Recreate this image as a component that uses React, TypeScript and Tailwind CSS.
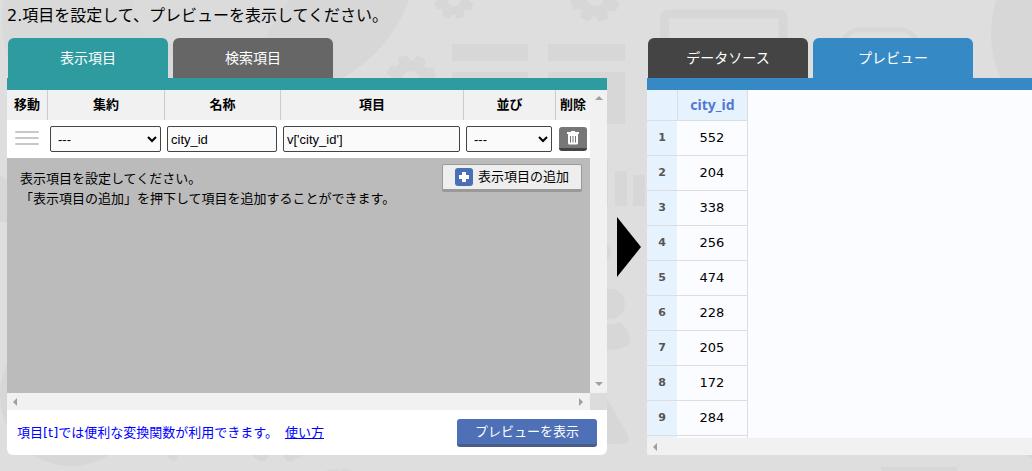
import { useState } from 'react'

type Item = { aggregate: string; name: string; expr: string; sort: string }

const cityIds = [552, 204, 338, 256, 474, 228, 205, 172, 284]

const fieldClass =
    'block h-[26px] w-full rounded-[2px] border border-[#444] bg-[#fafafa] font-[Liberation_Sans,Arial,sans-serif] text-[13px] text-black'

const gearTeeth = [0, 45, 90, 135, 180, 225, 270, 315]

function Gear({ x, y, r }: { x: number; y: number; r: number }) {
    return (
        <g transform={`translate(${x} ${y})`}>
            <circle r={r * 0.57} fill="none" stroke="#d7d7d7" strokeWidth={r * 0.42} />
            {gearTeeth.map((deg) => (
                <path
                    key={deg}
                    transform={`rotate(${deg + 25}) scale(${r})`}
                    d="M-.27 -.6 L-.2 -.94 Q-.19 -1 -.12 -1 H.12 Q.19 -1 .2 -.94 L.27 -.6Z"
                    fill="#d7d7d7"
                />
            ))}
        </g>
    )
}

function Backdrop() {
    return (
        <svg
            className="pointer-events-none absolute top-0 left-0 -z-10"
            width="1032"
            height="471"
            viewBox="0 0 1032 471"
            fill="#d7d7d7"
            aria-hidden="true"
        >
            <circle cx="146" cy="18" r="144" fill="#d9d9d9" />
            <circle cx="272" cy="-50" r="146" />
            <path d="M133 0Q135 22 150 44H263Q274 20 290 0Z" fill="#dbdbdb" />
            <Gear x={454} y={-1} r={20} />
            <Gear x={595} y={-3} r={25} />
            <Gear x={411} y={80} r={25} />
            <path d="M452 44h76v17h-76zM548 44h77v17h-77zM452 72h76v52h-76zM548 72h77v52h-77z" />
            <path
                d="M664.500 120V18q0-4 4-4H779q4 0 4 4v100"
                fill="none"
                stroke="#d7d7d7"
                strokeWidth="9"
            />
            <path
                d="M843 42q5-12 17-12h40q12 0 17 12"
                fill="none"
                stroke="#d7d7d7"
                strokeWidth="5"
            />
            <circle cx="1101" cy="33" r="110" />
            <path d="M600 161h8v45h-8zM615 171h12v35h-12zM633 175h12v31h-12z" />
            <circle cx="602" cy="252" r="9" />
            <circle cx="610" cy="304" r="15" />
            <path d="M600 325q14 0 20-3q13 12 9 22q-8 8-29 5z" />
            <path d="M600 386l28 50q3 7-6 8h-22z" />
            <path d="M0 176l7 4v42H0z" />
            <circle cx="71" cy="395" r="71" />
            <path d="M160 450h22l-8 12zM245 450h27l-5 9q-4 4-9 1zM282 450h23l-3 6-11 6q-4 0-7-5z" />
            <path d="M325 471q6-2 12-2l2 2zM341 469q7 0 12 2h-12z" />
            <path d="M881 467h76v4h-76zM1022 452l10 7v-7z" />
        </svg>
    )
}

function Arrow({ dir }: { dir: 'up' | 'down' | 'left' | 'right' }) {
    const shapes = {
        up: 'M1 6L5 2L9 6Z',
        down: 'M1 3L5 7L9 3Z',
        left: 'M6 1L2 5L6 9Z',
        right: 'M3 1L7 5L3 9Z',
    }
    return (
        <svg width="10" height="10" viewBox="0 0 10 10" fill="#a0a0a0">
            <path d={shapes[dir]} />
        </svg>
    )
}

function ItemRow({ item, onChange }: { item: Item; onChange: (item: Item) => void }) {
    return (
        <tr className="h-[38px] bg-white">
            <td className="p-0 pb-[2px]">
                <svg className="mx-auto block" width="25" height="14" viewBox="0 0 25 14">
                    <path d="M1 1h22M1 7h22M1 13h22" stroke="#c8c8c8" strokeWidth="2" strokeLinecap="round" />
                </svg>
            </td>
            <td className="py-0 pr-1 pl-[2px]">
                <select
                    aria-label="集約"
                    className={`${fieldClass} px-[3px]`}
                    value={item.aggregate}
                    onChange={(e) => onChange({ ...item, aggregate: e.target.value })}
                >
                    <option value="">---</option>
                </select>
            </td>
            <td className="py-0 pr-1 pl-[2px]">
                <input
                    aria-label="名称"
                    className={`${fieldClass} px-[3px]`}
                    value={item.name}
                    onChange={(e) => onChange({ ...item, name: e.target.value })}
                />
            </td>
            <td className="py-0 pr-1 pl-[2px]">
                <input
                    aria-label="項目"
                    className={`${fieldClass} px-[3px]`}
                    value={item.expr}
                    onChange={(e) => onChange({ ...item, expr: e.target.value })}
                />
            </td>
            <td className="py-0 pr-1 pl-[2px]">
                <select
                    aria-label="並び"
                    className={`${fieldClass} px-[3px]`}
                    value={item.sort}
                    onChange={(e) => onChange({ ...item, sort: e.target.value })}
                >
                    <option value="">---</option>
                </select>
            </td>
            <td className="px-[3px] py-0">
                <button
                    type="button"
                    aria-label="削除"
                    className="flex h-6 w-full items-center justify-center rounded-[3px] border-b-[3px] border-[#444] bg-[#777]"
                >
                    <svg width="12" height="14" viewBox="0 0 12 14" fill="white">
                        <path d="M4 0h4v1h4v2H0V1h4z" />
                        <path
                            fillRule="evenodd"
                            d="M1 3h10v9q0 1.500-1.500 1.500h-7Q1 13.500 1 12zM3 5v6.500h1V5zM5.500 5v6.500h1V5zM8 5v6.500h1V5z"
                        />
                    </svg>
                </button>
            </td>
        </tr>
    )
}

export default function App() {
    const [item, setItem] = useState<Item>({
        aggregate: '',
        name: 'city_id',
        expr: "v['city_id']",
        sort: '',
    })

    const headClass = 'border-r border-[#ccc] p-0 text-center font-bold'

    return (
        <div className="relative isolate min-h-screen overflow-hidden bg-[#dedede] pl-[7px] font-[DejaVu_Sans,Noto_Sans_CJK_JP,sans-serif] text-[13px] leading-5 text-black">
            <Backdrop />
            <p className="h-[38px] text-base leading-8">
                2.項目を設定して、プレビューを表示してください。
            </p>

            <div className="grid grid-cols-[minmax(0,600fr)_40px_minmax(0,385fr)]">
                <section>
                    <div className="flex gap-[5px] pl-px text-sm text-white">
                        <button type="button" className="h-10 w-40 rounded-t-md bg-[#2e9ba1]">
                            表示項目
                        </button>
                        <button type="button" className="h-10 w-40 rounded-t-md bg-[#666]">
                            検索項目
                        </button>
                    </div>
                    <div className="overflow-hidden rounded-b-md border-t-[12px] border-[#2e9ba1] bg-white">
                        <div className="grid grid-cols-[minmax(0,1fr)_17px] grid-rows-[auto_17px]">
                            <div className="min-h-[303px] bg-[#bbb]">
                                <table className="w-full table-fixed border-separate border-spacing-0">
                                    <colgroup>
                                        <col className="w-[41px]" />
                                        <col className="w-[117px]" />
                                        <col className="w-[116px]" />
                                        <col />
                                        <col className="w-[92px]" />
                                        <col className="w-[34px]" />
                                    </colgroup>
                                    <thead>
                                        <tr className="h-[30px] bg-[#f1f1f1]">
                                            <th className={headClass}>移動</th>
                                            <th className={headClass}>集約</th>
                                            <th className={headClass}>名称</th>
                                            <th className={headClass}>項目</th>
                                            <th className={headClass}>並び</th>
                                            <th className="p-0 text-center font-bold">削除</th>
                                        </tr>
                                    </thead>
                                    <tbody>
                                        <ItemRow item={item} onChange={setItem} />
                                    </tbody>
                                </table>
                                <div className="flex items-start justify-between pr-2 pl-[13px]">
                                    <p className="pt-[11px]">
                                        表示項目を設定してください。
                                        <br />
                                        「表示項目の追加」を押下して項目を追加することができます。
                                    </p>
                                    <button
                                        type="button"
                                        className="mt-[6px] flex h-7 w-[140px] shrink-0 items-center justify-center gap-[5px] rounded-[2px] border border-b-[3px] border-[#999] bg-[#eee]"
                                    >
                                        <svg width="18" height="18" viewBox="0 0 18 18">
                                            <rect width="18" height="18" rx="3" fill="#4a6fb5" />
                                            <path d="M9 4v10M4 9h10" stroke="white" strokeWidth="4" />
                                        </svg>
                                        表示項目の追加
                                    </button>
                                </div>
                            </div>
                            <div className="flex flex-col items-center justify-between bg-[#f1f1f1] py-1">
                                <Arrow dir="up" />
                                <Arrow dir="down" />
                            </div>
                            <div className="flex items-center justify-between bg-[#f1f1f1] px-1">
                                <Arrow dir="left" />
                                <Arrow dir="right" />
                            </div>
                            <div className="bg-[#dcdcdc]" />
                        </div>
                        <div className="flex h-[45px] items-center justify-between px-[10px]">
                            <p className="text-[#00f]">
                                項目[t]では便利な変換関数が利用できます。
                                <a href="#usage" className="ml-[7px] underline">
                                    使い方
                                </a>
                            </p>
                            <button
                                type="button"
                                className="h-7 w-[140px] rounded-[3px] border-b-[3px] border-[#4a5d88] bg-[#4d70b6] pt-[2px] text-white"
                            >
                                プレビューを表示
                            </button>
                        </div>
                    </div>
                </section>

                <div className="flex items-center justify-end pr-[6px]">
                    <svg width="24" height="60" viewBox="0 0 24 60">
                        <path d="M0 0L24 30L0 60Z" />
                    </svg>
                </div>

                <section>
                    <div className="flex gap-[5px] pl-px text-sm text-white">
                        <button type="button" className="h-10 w-40 shrink-0 rounded-t-md bg-[#444]">
                            データソース
                        </button>
                        <button type="button" className="h-10 w-40 shrink-0 rounded-t-md bg-[#358ac6]">
                            プレビュー
                        </button>
                    </div>
                    <div className="border-t-[12px] border-[#358ac6] bg-[#fbfcff]">
                        <div className="h-[348px] overflow-hidden">
                            <table className="w-[101px] table-fixed border-separate border-spacing-0 text-center">
                                <thead>
                                    <tr className="h-[31px] bg-[#e7f2ff]">
                                        <th className="w-[30px] border-b border-[#ddd] p-0" />
                                        <th className="border-x border-b border-[#ddd] p-0 font-[Noto_Sans,sans-serif] text-sm font-bold text-[#5079d2]">
                                            city_id
                                        </th>
                                    </tr>
                                </thead>
                                <tbody>
                                    {cityIds.map((id, i) => (
                                        <tr key={id} className="h-[35px]">
                                            <th className="border-b border-[#ddd] bg-[#e7f2ff] p-0 text-[11px] font-bold text-[#555]">
                                                {i + 1}
                                            </th>
                                            <td className="border-r border-b border-[#ddd] p-0">{id}</td>
                                        </tr>
                                    ))}
                                    <tr className="h-[35px]">
                                        <th className="bg-[#e7f2ff] p-0" />
                                        <td className="border-r border-[#ddd] p-0" />
                                    </tr>
                                </tbody>
                            </table>
                        </div>
                        <div className="flex h-[17px] items-center bg-[#f1f1f1] px-1">
                            <Arrow dir="left" />
                        </div>
                    </div>
                </section>
            </div>
        </div>
    )
}
